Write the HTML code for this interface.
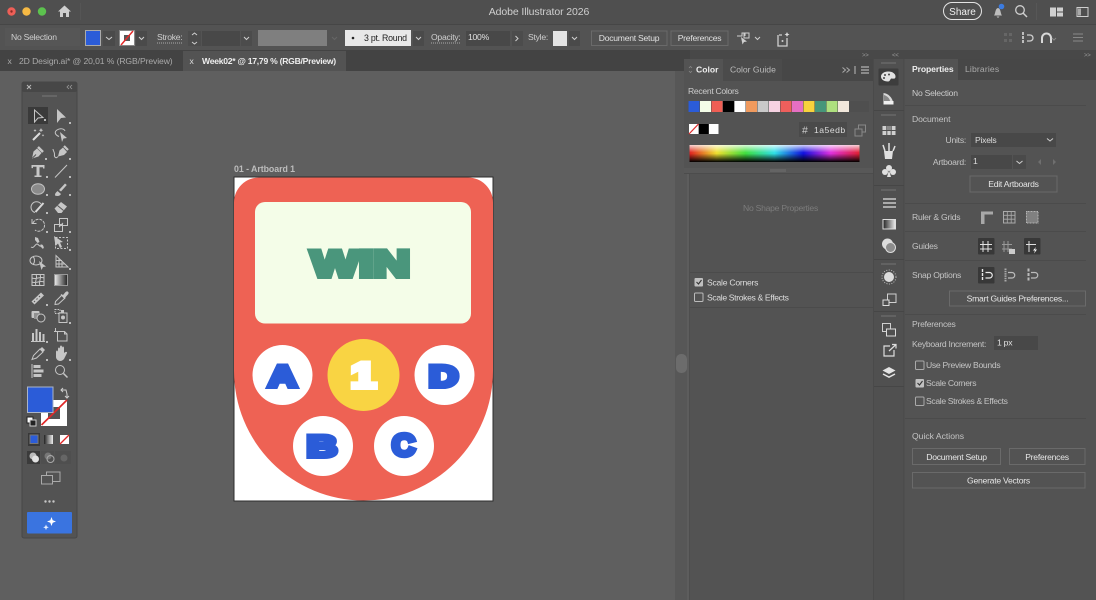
<!DOCTYPE html>
<html><head><meta charset="utf-8">
<style>
html,body{margin:0;padding:0;background:#5f5f5f;width:1096px;height:600px;overflow:hidden}
svg{display:block;filter:blur(.35px)}
text{font-family:"Liberation Sans",sans-serif;font-size:8.6px;fill:#cfcfcf;letter-spacing:-.25px}
.b{font-weight:bold}
.s{fill:none;stroke:#cfcfcf;stroke-width:1}
.btn{fill:#535353;stroke:#6a6a6a;stroke-width:1}
.c{fill:none;stroke:#d0d0d0;stroke-width:1}
.d{fill:#404040}
.line{stroke:#4b4b4b;stroke-width:1}
.h{font-size:30px;font-weight:bold;letter-spacing:0;stroke-linejoin:miter;stroke-miterlimit:3}
.t{fill:none;stroke:#c6c6c6;stroke-width:1}
.tf{fill:#c6c6c6;stroke:none}
</style></head><body>
<svg width="1096" height="600" viewBox="0 0 1096 600" xmlns="http://www.w3.org/2000/svg">
<defs>
<linearGradient id="sp" x1="0" x2="1" y1="0" y2="0">
<stop offset="0" stop-color="#e02020"/><stop offset=".16" stop-color="#f0e030"/><stop offset=".33" stop-color="#40e040"/><stop offset=".5" stop-color="#30e0e8"/><stop offset=".67" stop-color="#1010e0"/><stop offset=".83" stop-color="#e030e0"/><stop offset="1" stop-color="#e02030"/>
</linearGradient>
<linearGradient id="sv" x1="0" x2="0" y1="0" y2="1">
<stop offset="0" stop-color="#fff" stop-opacity=".8"/><stop offset=".45" stop-color="#fff" stop-opacity="0"/><stop offset=".5" stop-color="#000" stop-opacity="0"/><stop offset="1" stop-color="#000"/>
</linearGradient>
<linearGradient id="gr" x1="0" x2="1" y1="0" y2="0"><stop offset="0" stop-color="#222"/><stop offset="1" stop-color="#eee"/></linearGradient>
<linearGradient id="gr2" x1="0" x2="1" y1="0" y2="0"><stop offset="0" stop-color="#eee"/><stop offset="1" stop-color="#222"/></linearGradient>
</defs>

<!-- canvas -->
<rect width="1096" height="600" fill="#5f5f5f"/>

<!-- title bar -->
<rect width="1096" height="24" fill="#4f4f4f"/>
<circle cx="11.500" cy="11.500" r="4.200" fill="#ee5f57"/><circle cx="11.500" cy="11.500" r="1.200" fill="#8a2a25"/>
<circle cx="26.500" cy="11.500" r="4.200" fill="#f6b944"/>
<circle cx="42" cy="11.500" r="4.200" fill="#5cc24e"/>
<path d="M64.500 5.500L71 11.500H69V17H66V13H63V17H60V11.500H58Z" fill="#cfcfcf"/>
<line x1="80.500" y1="3" x2="80.500" y2="20" stroke="#555"/>
<text x="539" y="15" text-anchor="middle" style="font-size:10.500px;letter-spacing:-.1px">Adobe Illustrator 2026</text>
<rect x="943.500" y="2.500" width="38" height="17" rx="8.500" fill="none" stroke="#e4e4e4"/>
<text x="962.500" y="15" text-anchor="middle" style="font-size:10px;fill:#f0f0f0;letter-spacing:0">Share</text>
<path d="M994 15.500c1.500-1.500 1-7 4-7.500 3 .5 2.500 6 4 7.500zM996.500 16.500h3l-1.500 1.500z" fill="#bdbdbd"/>
<circle cx="1001.500" cy="6.500" r="2.800" fill="#3b7be0"/>
<circle cx="1020" cy="10" r="4.300" class="s" style="stroke-width:1.300"/><line x1="1023" y1="13" x2="1027" y2="17" stroke="#cfcfcf" stroke-width="1.500"/>
<line x1="1036.500" y1="3" x2="1036.500" y2="20" stroke="#575757"/>
<rect x="1050" y="7.500" width="6" height="9" fill="#d0d0d0"/><rect x="1057" y="7.500" width="6" height="4" fill="#d0d0d0"/><rect x="1057" y="12.500" width="6" height="4" fill="#d0d0d0"/>
<rect x="1077" y="7.500" width="11" height="9" class="s"/><rect x="1078" y="8.500" width="3" height="7" fill="#aaa"/>

<!-- control bar -->
<rect y="24" width="1096" height="26" fill="#535353"/>
<line x1="0" y1="24.500" x2="1096" y2="24.500" stroke="#464646"/>
<rect x="5" y="28" width="75" height="18" fill="#565656"/>
<text x="11" y="40">No Selection</text>
<rect x="85.500" y="30.500" width="15" height="15" fill="#2b5cd8" stroke="#aaa"/>
<rect x="103" y="31" width="12" height="15" fill="#4a4a4a"/>
<path d="M106 37l3 2.500 3-2.500" class="s"/>
<rect x="119.500" y="30.500" width="15" height="15" fill="#fff" stroke="#888"/>
<rect x="124" y="35" width="6" height="6" fill="#555"/>
<line x1="121" y1="45" x2="133" y2="31" stroke="#e42b2b" stroke-width="1.500"/>
<rect x="136" y="31" width="11" height="15" fill="#4a4a4a"/>
<path d="M139 37l2.500 2.500 2.500-2.500" class="s"/>
<text x="157" y="40">Stroke:</text>
<line x1="157" y1="43" x2="183" y2="43" stroke="#aaa" stroke-dasharray="1 1"/>
<rect x="188" y="31" width="13" height="15" fill="#4c4c4c"/>
<path d="M192 35l2.500-2 2.500 2M192 42l2.500 2 2.500-2" class="s"/>
<rect x="202" y="31" width="38" height="15" fill="#484848"/>
<rect x="241" y="31" width="11" height="15" fill="#4c4c4c"/>
<path d="M244 37l2.500 2.500 2.500-2.500" class="s"/>
<rect x="258" y="30" width="69" height="16" fill="#7f7f7f"/>
<path d="M332 37l2.500 2.500 2.500-2.500" fill="none" stroke="#666"/>
<rect x="345" y="30" width="66" height="16" fill="#e8e8e8"/>
<circle cx="353" cy="38" r="1.300" fill="#222"/>
<text x="364" y="41" style="fill:#222;font-size:8.800px;letter-spacing:-.25px">3 pt. Round</text>
<rect x="413" y="31" width="11" height="15" fill="#4a4a4a"/>
<path d="M416 37l2.500 2.500 2.500-2.500" class="s"/>
<text x="431" y="40">Opacity:</text>
<line x1="431" y1="43" x2="461" y2="43" stroke="#aaa" stroke-dasharray="1 1"/>
<rect x="466" y="31" width="44" height="15" fill="#484848"/>
<text x="468" y="40" style="fill:#e0e0e0">100%</text>
<rect x="512" y="31" width="11" height="15" fill="#4c4c4c"/>
<path d="M515.500 36l2.500 2.500-2.500 2.500" class="s"/>
<text x="528" y="40">Style:</text>
<rect x="553" y="31" width="14" height="15" fill="#e4e4e4"/>
<rect x="569" y="31" width="11" height="15" fill="#4a4a4a"/>
<path d="M572 37l2.500 2.500 2.500-2.500" class="s"/>
<rect class="btn" x="591.500" y="31" width="75.500" height="14.500"/>
<text x="629" y="41" text-anchor="middle" style="fill:#e0e0e0">Document Setup</text>
<rect class="btn" x="671" y="31" width="57" height="14.500"/>
<text x="699.500" y="41" text-anchor="middle" style="fill:#e0e0e0">Preferences</text>
<path d="M737 36h5v-3h3v3" class="s"/><path d="M741 37l6 4.500-3 .5-1.500 2.500z" fill="#cfcfcf"/><rect x="744" y="33" width="5" height="5" class="s"/>
<path d="M755 37l2.500 2.500 2.500-2.500" class="s"/>
<path d="M779 35h3M787 38v8h-9V35" class="s" style="stroke-width:1.300"/><circle cx="782.500" cy="41" r="1" fill="#cfcfcf"/><path d="M787 32l.8 1.700 1.700.8-1.700.8-.8 1.700-.8-1.700-1.700-.8 1.700-.8z" fill="#ddd"/>
<g fill="#666"><rect x="1004" y="33" width="3" height="3"/><rect x="1009" y="33" width="3" height="3"/><rect x="1004" y="39" width="3" height="3"/><rect x="1009" y="39" width="3" height="3"/></g>
<path d="M1023 32v12" stroke="#d8d8d8" stroke-width="1.600" stroke-dasharray="3 1"/><path d="M1027 35h3a3 3 0 0 1 0 6h-3" class="s" style="stroke-width:1.300"/>
<path d="M1042 43v-5a4.500 4.500 0 0 1 9 0v5" fill="none" stroke="#d8d8d8" stroke-width="2"/>
<path d="M1052 38l2 2 2-2" fill="none" stroke="#888"/>
<path d="M1073 34h10M1073 37.500h10M1073 41h10" stroke="#888"/>

<!-- tab bar -->
<rect y="50" width="690" height="21" fill="#434343"/>
<rect x="183" y="51" width="163" height="20" fill="#535353"/>
<text x="7.500" y="64" style="fill:#aaa">x</text>
<text x="19" y="64" style="fill:#aaa;letter-spacing:-.1px">2D Design.ai* @ 20,01 % (RGB/Preview)</text>
<text x="189.500" y="64" style="fill:#ddd">x</text>
<text x="202" y="64" class="b" style="fill:#eee;letter-spacing:-.26px">Week02* @ 17,79 % (RGB/Preview)</text>

<!-- gutter -->
<rect x="675" y="71" width="12" height="529" fill="#575757"/>
<rect x="687" y="71" width="3" height="529" fill="#5d5d5d"/>
<rect x="676" y="354" width="11" height="19" rx="5" fill="#6c6c6c"/>

<!-- strip above panels -->
<rect x="690" y="50" width="406" height="9" fill="#484848"/>
<text x="862" y="57" style="font-size:6px;fill:#999">&gt;&gt;</text>
<text x="892" y="57" style="font-size:6px;fill:#999">&lt;&lt;</text>
<text x="1084" y="57" style="font-size:6px;fill:#999">&gt;&gt;</text>

<!-- mid panel -->
<rect x="690" y="168" width="183" height="432" fill="#535353"/>
<line x1="689.500" y1="173" x2="689.500" y2="600" stroke="#4e4e4e"/>
<line x1="873.500" y1="59" x2="873.500" y2="600" stroke="#4a4a4a"/>
<text x="780.500" y="211" text-anchor="middle" style="fill:#7c7c7c">No Shape Properties</text>
<line class="line" x1="690" y1="272.500" x2="873" y2="272.500"/>
<rect x="694.500" y="278" width="8.500" height="8.500" rx="1" fill="#c0c0c0"/><path d="M696.500 282l2 2 3-4" fill="none" stroke="#333" stroke-width="1.100"/>
<text x="707" y="285.500" style="fill:#ddd">Scale Corners</text>
<rect x="694.500" y="293" width="8.500" height="8.500" rx="1" fill="none" stroke="#bbb"/>
<text x="707" y="300.500" style="fill:#ddd;letter-spacing:-.35px">Scale Strokes &amp; Effects</text>
<line class="line" x1="690" y1="307.500" x2="873" y2="307.500"/>

<!-- Color panel -->
<rect x="684" y="59" width="189" height="109" fill="#535353"/>
<rect x="684" y="59" width="189" height="22" fill="#474747"/>
<rect x="684" y="59" width="39" height="22" fill="#535353"/>
<rect x="723" y="59" width="59" height="22" fill="#4b4b4b"/>
<rect x="684" y="168" width="189" height="5" fill="#585858"/>
<rect x="770" y="169" width="16" height="3" fill="#646464"/>
<line x1="684" y1="173.500" x2="873" y2="173.500" stroke="#4c4c4c"/>
<path d="M689 68l1.500-1.500 1.500 1.500M689 71l1.500 1.500 1.500-1.500" fill="none" stroke="#888" stroke-width=".8"/>
<text x="696" y="72.500" class="b" style="fill:#eee;letter-spacing:0">Color</text>
<text x="730" y="72.500" style="fill:#bbb;letter-spacing:0">Color Guide</text>
<path d="M842.500 67.500l3 2.500-3 2.500M846.500 67.500l3 2.500-3 2.500" fill="none" stroke="#aaa"/>
<line x1="855" y1="66" x2="855" y2="74" stroke="#bbb"/>
<path d="M861 67h8M861 70h8M861 73h8" stroke="#ccc"/>
<text x="688" y="94" style="fill:#ccc;letter-spacing:-.3px">Recent Colors</text>
<rect x="688" y="101" width="181" height="11" fill="#4f4f4f"/>
<g>
<rect x="688.500" y="101" width="11" height="11" fill="#2b5cd8"/>
<rect x="700" y="101" width="11" height="11" fill="#f4fde8"/>
<rect x="711.500" y="101" width="11" height="11" fill="#ef5e54"/>
<rect x="723" y="101" width="11" height="11" fill="#000"/>
<rect x="734.500" y="101" width="11" height="11" fill="#fff"/>
<rect x="746" y="101" width="11" height="11" fill="#f09a5e"/>
<rect x="757.500" y="101" width="11" height="11" fill="#c9c9c9"/>
<rect x="769" y="101" width="11" height="11" fill="#f6d2e2"/>
<rect x="780.500" y="101" width="11" height="11" fill="#ee5f5c"/>
<rect x="792" y="101" width="11" height="11" fill="#e66fc2"/>
<rect x="803.500" y="101" width="11" height="11" fill="#f8d23c"/>
<rect x="815" y="101" width="11" height="11" fill="#47967a"/>
<rect x="826.500" y="101" width="11" height="11" fill="#aee07e"/>
<rect x="838" y="101" width="11" height="11" fill="#f1e7db"/>
</g>
<rect x="689" y="124" width="9.500" height="10" fill="#fff"/><line x1="689" y1="134" x2="698.500" y2="124" stroke="#e02b2b" stroke-width="1.200"/>
<rect x="699" y="124" width="9.500" height="10" fill="#000"/>
<rect x="709" y="124" width="9.500" height="10" fill="#fff"/>
<rect x="799" y="122" width="48" height="15" fill="#4a4a4a"/>
<text x="802" y="133.500" style="font-size:10.500px;fill:#ccc">#</text>
<text x="814" y="133" style="fill:#ddd;letter-spacing:.5px">1a5edb</text>
<rect x="858.500" y="125" width="7" height="7" class="s" style="stroke:#888"/><rect x="855" y="129" width="7" height="7" fill="#535353" stroke="#888"/>
<rect x="689.500" y="145" width="170" height="17" fill="url(#sp)"/>
<rect x="689.500" y="145" width="170" height="17" fill="url(#sv)"/>

<!-- dock -->
<rect x="874" y="59" width="30" height="541" fill="#505050"/>
<line x1="904" y1="59" x2="904" y2="600" stroke="#4a4a4a" stroke-width="1.500"/>
<g stroke="#464646"><line x1="874" y1="110.500" x2="904" y2="110.500"/><line x1="874" y1="185.500" x2="904" y2="185.500"/><line x1="874" y1="259.500" x2="904" y2="259.500"/><line x1="874" y1="311.500" x2="904" y2="311.500"/><line x1="874" y1="386.500" x2="904" y2="386.500"/></g>
<g fill="#626262"><rect x="881" y="62" width="15" height="2"/><rect x="881" y="114" width="15" height="2"/><rect x="881" y="189" width="15" height="2"/><rect x="881" y="263" width="15" height="2"/><rect x="881" y="315" width="15" height="2"/></g>
<rect x="878.500" y="68.500" width="20" height="17" rx="1" fill="#3d3d3d"/>
<path d="M888 71.500c5 0 7.500 2.500 7.500 5 0 3-2.500 2-4 2-1.500 0-1 3-3.500 3-4 0-7-2-7-5s3.500-5 7-5z" fill="#e2e2e2"/>
<circle cx="885" cy="75" r="1" fill="#444"/><circle cx="889" cy="74.500" r="1" fill="#444"/><circle cx="884" cy="78" r="1" fill="#444"/>
<path d="M883.500 93c5 .5 9.500 5 10 11.500h-10z" fill="#d8d8d8"/><rect x="883.500" y="101" width="10" height="3.500" fill="#f0f0f0"/><path d="M884 95v6h6c-.5-3-3-5-6-6z" fill="#888"/>
<g><rect x="882.500" y="126" width="13" height="9" fill="#cfcfcf"/><path d="M886.800 126v9M891.200 126v9M882.500 130.500h13" stroke="#505050"/><rect x="887" y="126" width="4" height="4" fill="#888"/></g>
<path d="M884 151h9l-1 8h-7z" fill="#e0e0e0"/><path d="M885 151l-2-6M889 151v-8M893 151l2-5" stroke="#e0e0e0" stroke-width="1.500"/>
<circle cx="889" cy="168" r="3" fill="#e0e0e0"/><circle cx="885" cy="172" r="3" fill="#e0e0e0"/><circle cx="893" cy="172" r="3" fill="#e0e0e0"/><path d="M889 170l2 7h-4z" fill="#e0e0e0"/>
<path d="M883 199h13M883 203h13M883 207h13" stroke="#e0e0e0" stroke-width="1.300"/>
<rect x="883" y="219.500" width="12.500" height="9.500" fill="url(#gr)" stroke="#ddd"/>
<circle cx="887.500" cy="244" r="5.500" fill="#dcdcdc"/><circle cx="890.500" cy="247.500" r="5" fill="#8c8c8c" stroke="#ddd"/>
<circle cx="889" cy="277" r="5" fill="#dcdcdc"/><circle cx="889" cy="277" r="7" fill="none" stroke="#bbb" stroke-dasharray="1 1.500"/>
<rect x="887.500" y="294" width="8.500" height="8.500" class="c"/><rect x="883" y="300" width="6" height="5.500" fill="#505050" stroke="#ddd"/>
<rect x="882.500" y="323.500" width="8" height="8" class="c"/><rect x="886.500" y="329" width="9" height="7" fill="#505050" stroke="#ddd"/>
<path d="M890 346h-6v10h10v-6M889 351l7-6.500M892 344.500h4v4" fill="none" stroke="#ddd" stroke-width="1.200"/>
<path d="M889 367l6.500 3.500-6.500 3.500-6.500-3.500z" fill="#e4e4e4"/><path d="M883 374l6 3.200 6-3.200" fill="none" stroke="#e4e4e4" stroke-width="1.500"/>

<!-- right panel -->
<rect x="905" y="59" width="191" height="541" fill="#535353"/>
<rect x="905" y="59" width="191" height="21" fill="#474747"/>
<rect x="905" y="59" width="53" height="21" fill="#535353"/>
<text x="912" y="72" class="b" style="fill:#eee;letter-spacing:-.1px">Properties</text>
<text x="965" y="72" style="fill:#aaa;letter-spacing:.15px">Libraries</text>
<text x="912" y="96" style="fill:#ccc">No Selection</text>
<line class="line" x1="905" y1="105.500" x2="1086" y2="105.500"/>
<text x="912" y="122" style="fill:#c4c4c4;letter-spacing:-.1px">Document</text>
<text x="966" y="143" text-anchor="end" style="fill:#c4c4c4">Units:</text>
<rect x="971" y="133" width="85" height="14" fill="#484848"/>
<text x="975" y="143" style="fill:#ddd">Pixels</text>
<path d="M1047 138.500l3 2.500 3-2.500" class="s"/>
<text x="966" y="165" text-anchor="end" style="fill:#c4c4c4">Artboard:</text>
<rect x="971" y="155" width="41" height="14" fill="#484848"/>
<text x="973" y="164" style="fill:#ddd">1</text>
<rect x="1013" y="155" width="13" height="14" fill="#4a4a4a"/>
<path d="M1016.500 161l3 2.500 3-2.500" class="s"/>
<path d="M1041 159v6l-3-3z" fill="#6f6f6f"/><path d="M1053 159v6l3-3z" fill="#6f6f6f"/>
<rect class="btn" x="970" y="176" width="87" height="16"/>
<text x="1013.500" y="187" text-anchor="middle" style="fill:#e6e6e6">Edit Artboards</text>
<line class="line" x1="905" y1="203.500" x2="1086" y2="203.500"/>
<text x="912" y="220" style="fill:#c4c4c4">Ruler &amp; Grids</text>
<path d="M981 224v-12.500h12v3h-8.500V224z" fill="#a8a8a8"/>
<rect x="1003.500" y="211.500" width="11.500" height="11.500" fill="none" stroke="#aaa"/><path d="M1007.300 211.500v11.500M1011.200 211.500v11.500M1003.500 215.300h11.500M1003.500 219.200h11.500" fill="none" stroke="#aaa" stroke-width=".8"/>
<rect x="1026.500" y="211.500" width="11.500" height="11.500" fill="#808080" stroke="#b4b4b4" stroke-dasharray="1 .5"/>
<line class="line" x1="905" y1="231.500" x2="1086" y2="231.500"/>
<text x="912" y="249" style="fill:#c4c4c4">Guides</text>
<rect x="978" y="238" width="16.500" height="16.500" rx="1" fill="#383838"/>
<path d="M983 241v11M988 241v11M980 244.500h12M980 249h12" stroke="#e2e2e2"/>
<path d="M1004 241v11M1008 241v11M1002 244.500h10M1002 249h10" stroke="#999"/><rect x="1009" y="249" width="6" height="5" fill="#ccc"/>
<rect x="1024" y="238" width="16.500" height="16.500" rx="1" fill="#383838"/>
<path d="M1029 241v11M1026 244.500h10" stroke="#e2e2e2"/><path d="M1036 247l-3 3.500h2l-1 3 3-4h-2z" fill="#fff"/>
<line class="line" x1="905" y1="260.500" x2="1086" y2="260.500"/>
<text x="912" y="278" style="fill:#c4c4c4">Snap Options</text>
<rect x="978" y="267" width="16.500" height="16.500" rx="1" fill="#383838"/>
<path d="M982.500 269v12" stroke="#e8e8e8" stroke-width="1.400" stroke-dasharray="3 1"/><path d="M985.500 272.500h4a2.700 2.700 0 0 1 0 5.500h-4" fill="none" stroke="#e8e8e8" stroke-width="1.200"/>
<path d="M1005.500 268.500v13" stroke="#aaa" stroke-width="2" stroke-dasharray="1.500 .8"/><path d="M1008 272.500h4a2.700 2.700 0 0 1 0 5.500h-4" fill="none" stroke="#bbb" stroke-width="1.200"/>
<path d="M1028.500 268.500v13" stroke="#bbb" stroke-width="2" stroke-dasharray="3 1.500"/><path d="M1031 272.500h4a2.700 2.700 0 0 1 0 5.500h-4" fill="none" stroke="#bbb" stroke-width="1.200"/>
<rect class="btn" x="949.500" y="291" width="136" height="15"/>
<text x="1017.500" y="301.500" text-anchor="middle" style="fill:#e6e6e6">Smart Guides Preferences...</text>
<line class="line" x1="905" y1="314.500" x2="1086" y2="314.500"/>
<text x="912" y="327" style="fill:#c4c4c4">Preferences</text>
<text x="912" y="347" style="fill:#c4c4c4;letter-spacing:-.3px">Keyboard Increment:</text>
<rect x="994" y="336" width="44" height="14" fill="#484848"/>
<text x="997" y="345.500" style="fill:#e0e0e0">1 px</text>
<rect x="915.500" y="361" width="8.500" height="8.500" rx="1" fill="none" stroke="#aaa"/>
<text x="926" y="368" style="fill:#c4c4c4;letter-spacing:-.3px">Use Preview Bounds</text>
<rect x="915.500" y="379" width="8.500" height="8.500" rx="1" fill="#c0c0c0"/><path d="M917.500 383l2 2 3-4" fill="none" stroke="#333" stroke-width="1.100"/>
<text x="926" y="386" style="fill:#c4c4c4;letter-spacing:-.33px">Scale Corners</text>
<rect x="915.500" y="397" width="8.500" height="8.500" rx="1" fill="none" stroke="#aaa"/>
<text x="926" y="404" style="fill:#c4c4c4;letter-spacing:-.35px">Scale Strokes &amp; Effects</text>
<line class="line" x1="905" y1="418.500" x2="1086" y2="418.500"/>
<text x="912" y="439" style="fill:#c4c4c4;letter-spacing:0">Quick Actions</text>
<rect class="btn" x="912.500" y="448.500" width="88" height="16"/>
<text x="956.500" y="460" text-anchor="middle" style="fill:#e6e6e6">Document Setup</text>
<rect class="btn" x="1009.500" y="448.500" width="75.500" height="16"/>
<text x="1047" y="460" text-anchor="middle" style="fill:#e6e6e6">Preferences</text>
<rect class="btn" x="912.500" y="472.500" width="172.500" height="15.500"/>
<text x="998.500" y="483.500" text-anchor="middle" style="fill:#e6e6e6">Generate Vectors</text>

<!-- artboard -->
<text x="234" y="172" class="b" style="fill:#bdbdbd;font-size:8.800px;letter-spacing:-.05px">01 - Artboard 1</text>
<rect x="234" y="177" width="259" height="324" fill="#fff" stroke="#2e2e2e" stroke-width="1"/>
<path d="M259 177.500H468a25 25 0 0 1 25 25V371a129.500 129.500 0 0 1-259 0V202.500a25 25 0 0 1 25-25z" fill="#ee6254"/>
<rect x="255" y="202" width="216" height="121.500" rx="10" fill="#f4fde8"/>
<text x="311" y="276.500" class="h" textLength="99" lengthAdjust="spacingAndGlyphs" style="font-size:37px;fill:#4a967c;stroke:#4a967c;stroke-width:5">WIN</text>
<circle cx="282.500" cy="375" r="30" fill="#fff"/>
<circle cx="363.500" cy="375" r="36" fill="#f9d443"/>
<circle cx="444.500" cy="375" r="30" fill="#fff"/>
<circle cx="323" cy="446" r="30" fill="#fff"/>
<circle cx="404" cy="446" r="30" fill="#fff"/>
<text x="268.500" y="386.500" class="h" textLength="28" lengthAdjust="spacingAndGlyphs" style="fill:#2b5cd8;stroke:#2b5cd8;stroke-width:5">A</text>
<text x="351" y="387.500" class="h" textLength="25" lengthAdjust="spacingAndGlyphs" style="font-size:35px;fill:#fff;stroke:#fff;stroke-width:5">1</text>
<text x="429" y="386.500" class="h" textLength="29" lengthAdjust="spacingAndGlyphs" style="fill:#2b5cd8;stroke:#2b5cd8;stroke-width:5">D</text>
<text x="307" y="456.500" class="h" textLength="30" lengthAdjust="spacingAndGlyphs" style="fill:#2b5cd8;stroke:#2b5cd8;stroke-width:5">B</text>
<text x="392" y="455.500" class="h" textLength="23" lengthAdjust="spacingAndGlyphs" style="font-size:31px;fill:#2b5cd8;stroke:#2b5cd8;stroke-width:5">C</text>

<!-- tools panel -->
<rect x="22" y="82" width="55" height="456" rx="2" fill="#535353" stroke="#474747"/>
<rect x="22" y="82" width="55" height="10" rx="2" fill="#474747"/>
<path d="M27 85l4 4M31 85l-4 4" stroke="#bbb"/>
<path d="M69 85l-2 2 2 2M72 85l-2 2 2 2" fill="none" stroke="#999" stroke-width=".8"/>
<rect x="42" y="95" width="15" height="2" fill="#666"/>
<rect x="28" y="107" width="20" height="17" fill="#3a3a3a"/>

<!-- tool icons -->
<g transform="translate(38,116)"><path class="t" d="M-3.500-6L5 1.500 0 2-3.500 6z"/></g>
<g transform="translate(61,116)"><path class="tf" d="M-4-7L5 1.500 0 2-4 7z"/></g>
<g transform="translate(38,134)"><path d="M-5 6L2-1" stroke="#dcdcdc" stroke-width="2"/><path class="tf" d="M3-6l.7 1.500 1.500.7-1.500.7-.7 1.500-.7-1.500-1.500-.7 1.500-.7zM-3-5l.5 1 1 .5-1 .5-.5 1-.5-1-1-.5 1-.5zM5 0l.4.9.9.4-.9.4-.4.9-.4-.9-.9-.4.9-.4z"/></g>
<g transform="translate(61,134)"><path class="t" d="M-2 2.500C-6 1-7-2-4-4c3-2 7-1.500 8 1"/><path class="tf" d="M-1-2L6 4 2.500 4.500 1 8z"/></g>
<g transform="translate(38,152)"><path class="tf" d="M-6 6.500L-4.500-.5-1-3.500 3.500 1 .5 4.500z"/><path d="M0-5L5 0" stroke="#c6c6c6" stroke-width="2.500"/><path d="M-5.500 6L-2 2.500" stroke="#535353"/></g>
<g transform="translate(61,152)"><path class="tf" d="M-3 4.500L-1.500-1.500 2-4.500 6 0 3 3z"/><path d="M3-6L7-2" stroke="#c6c6c6" stroke-width="2.200"/><path class="t" d="M-3 4.500C-5 7-7 5-6.500 2.500-6.200 0-8-1-8-3"/></g>
<g transform="translate(38,171)"><path class="tf" d="M-6.500-6h13v3.500H5v-1.300H1.500V4.500h2V6h-7V4.500h2v-8.700H-5v1.300h-1.500z"/></g>
<g transform="translate(61,171)"><path class="t" d="M-6 6.500L6-6" stroke-width="1.200"/></g>
<g transform="translate(38,189)"><ellipse rx="6.500" ry="5.300" fill="#8a8a8a" stroke="#c2c2c2"/></g>
<g transform="translate(61,189)"><path class="tf" d="M-6 6.500c0-3 1.500-3 2.500-4.500l3.500 3c-1 2-3.500 2.500-6 1.500zM-2 1L4-5.500l1.800 1.500L0 2.500z"/></g>
<g transform="translate(38,207)"><path class="t" d="M-3 5.500A5.500 5.500 0 1 1 3-3"/><path d="M-2.500 5L5.500-4" stroke="#d8d8d8" stroke-width="2"/></g>
<g transform="translate(61,207)"><path class="tf" d="M-6.500 1.500L0-5l6 4.500-5.500 6.500H-3z"/><path d="M-3.500-1.500L2.500 3.500" stroke="#535353"/></g>
<g transform="translate(38,225)"><path class="t" d="M-5-2A6 6 0 1 1-3 5" stroke-dasharray="3 1"/><path class="t" d="M-6-6v4.500h4.500"/></g>
<g transform="translate(61,225)"><rect class="t" x="-6.500" y="-.5" width="8" height="7"/><rect class="t" x="-1.500" y="-6.500" width="8" height="7"/><path class="t" d="M-2 2l4-4"/></g>
<g transform="translate(38,243)"><path class="t" d="M-7 4c3 2 4-3 6-3s2 4 6 1" stroke-width="1.300"/><path class="tf" d="M-3-6l3 1 1.500 4-2 1-2.500-3zM3 1l3 3-1 2-3-3z"/></g>
<g transform="translate(61,243)"><rect class="t" x="-5.500" y="-5.500" width="12" height="11" stroke-dasharray="2 1.500"/><path class="tf" d="M-7-7L2-1l-3 .5L1 4-1 5-3 .5-5.500 3z"/></g>
<g transform="translate(38,262)"><ellipse class="t" cx="-2" cy="-1.500" rx="6" ry="4.500"/><path class="t" d="M-5-5.500c2 2 2 6 0 8"/><path class="tf" d="M1-1l7 5.500-3 .5-1.500 3z"/></g>
<g transform="translate(61,262)"><path class="t" d="M-5-6.500V5h12zM-2-3.500V5M1-.5V5M-5-1.500h6M-5 2h9"/></g>
<g transform="translate(38,280)"><rect class="t" x="-6" y="-5.500" width="12" height="11"/><path class="t" d="M-6-2c4 2 8-2 12 0M-6 2c4 2 8-2 12 0M-2-5.500c2 4-2 7 0 11M2-5.500c2 4-2 7 0 11" stroke-width=".8"/></g>
<g transform="translate(61,280)"><rect x="-6.500" y="-5.500" width="13" height="11" fill="url(#gr2)" stroke="#999"/></g>
<g transform="translate(38,298)"><path class="tf" d="M-6.500 3.500L3-5.500 6-2.500-3.500 6.500z"/><path d="M-3 3l-1 1M-.5.500l-1 1M2-2l-1 1" stroke="#535353"/></g>
<g transform="translate(61,298)"><path class="t" d="M-6 6.500l.5-3L1-3l3 3-6.500 6z"/><path d="M0-3.500l4 4M2-2l3-3.500c1.500-1 2.500 0 1.500 1.500L3 0" stroke="#c6c6c6" stroke-width="1.300" fill="#c6c6c6"/></g>
<g transform="translate(38,316)"><rect x="-6.500" y="-5" width="8" height="7" fill="#c6c6c6" rx="1"/><rect x="-4" y="-3" width="6" height="6" fill="#909090"/><circle class="t" cx="3" cy="2" r="4" style="fill:#535353"/></g>
<g transform="translate(61,316)"><rect class="t" x="-6" y="-6.500" width="5" height="4" stroke-dasharray="1.500 1"/><rect class="t" x="-2" y="-3" width="8" height="9.500"/><rect class="tf" x="0" y="-6" width="3" height="3"/><circle class="tf" cx="2" cy="1.500" r="2"/></g>
<g transform="translate(38,335)"><path class="tf" d="M-6-2h2v8h-2zM-2.500-6h2V6h-2zM1-3h2v9H1zM4.500-1h2v7h-2z"/><rect class="tf" x="-7" y="6" width="14" height="1"/></g>
<g transform="translate(61,335)"><path class="t" d="M-5.500-7v3.500M-7-3.500H3.500L6-1v7H-3.500V-3.500"/><path class="t" d="M3.500-3.500V-1H6"/></g>
<g transform="translate(38,353)"><path class="t" d="M-6 6.500l1.500-4L2-4 5-1-1.500 5z" stroke-width="1.100"/><path class="tf" d="M2-4L4-6 7-3 5-1z"/></g>
<g transform="translate(61,353)"><path class="tf" d="M-5 4V-1c0-2 2-2 2 0v-3c0-2 2-2 2 0v-2c0-2 2-2 2 0v1c0-2 2-2 2 0v5c2-2 3.500-1 3 0L3 6C2 7 1 8-1 8c-2 0-4-2-4-4z"/></g>
<g transform="translate(38,371)"><path class="t" d="M-6-7V7"/><rect class="tf" x="-4.500" y="-6" width="7" height="3"/><rect class="tf" x="-4.500" y="-1.500" width="10" height="3" /><rect class="tf" x="-4.500" y="3" width="8" height="3"/></g>
<g transform="translate(61,371)"><circle class="t" cx="-1" cy="-1" r="4.500"/><path d="M2.500 2.500l4 4" stroke="#c6c6c6" stroke-width="1.500"/></g>

<g fill="#bbb"><rect x="44" y="119" width="2" height="2"/><rect x="69" y="122" width="2" height="2"/><rect x="45" y="158" width="2" height="2"/><rect x="69" y="158" width="2" height="2"/><rect x="46" y="176" width="2" height="2"/><rect x="69" y="176" width="2" height="2"/><rect x="46" y="194" width="2" height="2"/><rect x="69" y="194" width="2" height="2"/><rect x="46" y="212" width="2" height="2"/><rect x="46" y="231" width="2" height="2"/><rect x="69" y="231" width="2" height="2"/><rect x="69" y="249" width="2" height="2"/><rect x="69" y="268" width="2" height="2"/><rect x="46" y="304" width="2" height="2"/><rect x="69" y="322" width="2" height="2"/><rect x="46" y="341" width="2" height="2"/><rect x="46" y="359" width="2" height="2"/><rect x="69" y="359" width="2" height="2"/></g>

<!-- fill & stroke -->
<rect x="41" y="400" width="26" height="26" fill="#fff"/>
<rect x="48" y="407" width="12" height="12" fill="#535353"/>
<line x1="41.500" y1="425" x2="67" y2="400" stroke="#e12828" stroke-width="1.700"/>
<rect x="27.500" y="387" width="25.500" height="25.500" fill="#2b5cd8" stroke="#aab4c8"/>
<path d="M61 390h5l1 4v3M63 388l-2 2 2 2M65 396l2 2 2-2" fill="none" stroke="#d0d0d0"/>
<rect x="27" y="417" width="6" height="6" fill="#fff" stroke="#222"/><rect x="30" y="420" width="6" height="6" fill="#222" stroke="#ccc"/>
<rect x="28" y="433" width="12" height="13" fill="#383838"/><rect x="30" y="435" width="8" height="8.500" fill="#2b5cd8" stroke="#777"/>
<rect x="44" y="435" width="9" height="9" fill="url(#gr)"/>
<rect x="60" y="435" width="9" height="9" fill="#fff"/><line x1="60" y1="444" x2="69" y2="435" stroke="#e12828" stroke-width="1.300"/>
<rect x="27" y="451" width="13" height="13" fill="#3b3b3b"/>
<rect x="41" y="451" width="13" height="13" fill="#4f4f4f"/>
<rect x="55" y="451" width="16" height="13" fill="#4f4f4f"/>
<circle cx="33" cy="456" r="3.500" fill="#bbb"/><circle cx="35.500" cy="459" r="3.500" fill="#e2e2e2"/>
<circle cx="48" cy="456" r="3.500" fill="#777"/><circle cx="50.500" cy="459" r="3.500" fill="none" stroke="#aaa"/>
<circle cx="64" cy="458" r="3.500" fill="#666"/>
<rect x="46.500" y="472" width="13.500" height="9.500" fill="none" stroke="#aaa"/><rect x="41.500" y="475.500" width="11" height="8.500" fill="#535353" stroke="#aaa"/>
<circle cx="45.500" cy="501.500" r="1.200" fill="#c8c8c8"/><circle cx="49.500" cy="501.500" r="1.200" fill="#c8c8c8"/><circle cx="53.500" cy="501.500" r="1.200" fill="#c8c8c8"/>
<rect x="27" y="512" width="45" height="21.500" rx="1" fill="#3a74e0"/>
<path d="M51.500 517l1.200 3.300 3.300 1.200-3.300 1.200-1.200 3.300-1.200-3.300-3.300-1.200 3.300-1.200z" fill="#fff"/>
<path d="M46 524.500l.8 2 2 .8-2 .8-.8 2-.8-2-2-.8 2-.8z" fill="#e8f0ff"/>
</svg>
</body></html>
